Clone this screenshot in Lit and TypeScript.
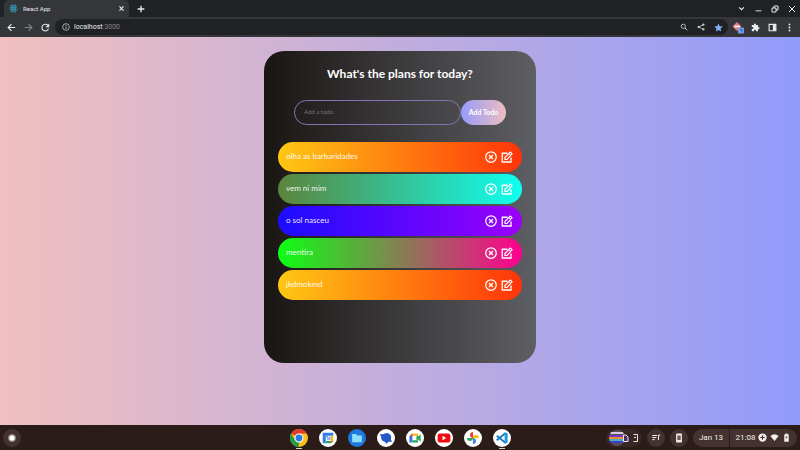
import { LitElement, html, css, svg, TemplateResult } from "lit";
import { customElement, property, state } from "lit/decorators.js";

const icon = (body: TemplateResult, size = 12, box = 24) => html`<svg
  width=${size} height=${size} viewBox="0 0 ${box} ${box}" fill="currentColor" aria-hidden="true">${body}</svg>`;

const stroke = (d: string, width = 2) =>
  svg`<path d=${d} fill="none" stroke="currentColor" stroke-width=${width} />`;

const buttonReset = css`
  * { box-sizing: border-box; }
  button {
    display: flex;
    align-items: center;
    justify-content: center;
    margin: 0;
    padding: 0;
    border: 0;
    background: none;
    color: inherit;
    font: inherit;
    flex: none;
  }
  svg { display: block; flex: none; }
`;

@customElement("browser-bar")
class BrowserBar extends LitElement {
  static styles = [buttonReset, css`
    :host {
      display: block;
      background: #202124;
      color: #e8eaed;
      font: 7px/10px Roboto, sans-serif;
    }
    .tabs { display: flex; height: 17px; padding: 0 1px 0 4px; }
    .tab {
      display: flex;
      align-items: center;
      gap: 5px;
      width: 125px;
      padding: 0 4px 0 5px;
      border-radius: 5px 5px 0 0;
      background: #35363a;
    }
    .title { flex: 1; font-size: 6px; }
    .new { width: 23px; }
    .window { display: flex; align-items: center; gap: 3px; margin-left: auto; }
    .tool { width: 14px; height: 14px; }
    .bar {
      display: flex;
      align-items: center;
      gap: 3px;
      height: 20px;
      padding: 0 4px;
      background: #35363a;
    }
    .dim { color: #85878b; }
    .field {
      display: flex;
      align-items: center;
      flex: 1;
      gap: 3px;
      height: 16px;
      padding: 0 3px 0 7px;
      border-radius: 8px;
      background: #202124;
      color: #c6c8cc;
    }
    .url { flex: 1; padding-left: 1px; color: #85878b; }
    .url b { color: #e8eaed; font-weight: 400; }
    .star { color: #7fb2f5; }
    .extensions { display: flex; gap: 3px; }
  `];

  render() {
    return html`
      <div class="tabs">
        <div class="tab">
          <svg width="9" height="9" viewBox="0 0 24 24" fill="none" stroke="#35a5bd" stroke-width="2">
            <ellipse cx="12" cy="12" rx="11" ry="4" />
            <ellipse cx="12" cy="12" rx="11" ry="4" transform="rotate(60 12 12)" />
            <ellipse cx="12" cy="12" rx="11" ry="4" transform="rotate(120 12 12)" />
            <circle cx="12" cy="12" r="1.5" />
          </svg>
          <span class="title">React App</span>
          <button aria-label="Close tab">${icon(stroke("M5 5 19 19M19 5 5 19", 4), 7)}</button>
        </div>
        <button class="new" aria-label="New tab">${icon(stroke("M12 2V22M2 12H22", 4), 8)}</button>
        <div class="window">
          <button class="tool" aria-label="Search tabs">${icon(stroke("M4 8 12 16 20 8", 4), 7)}</button>
          <button class="tool" aria-label="Minimize">${icon(stroke("M2 20H22", 3), 7)}</button>
          <button class="tool" aria-label="Restore">${icon(stroke("M3 9H15V21H3ZM9 9V3H21V15H15", 3), 8)}</button>
          <button class="tool" aria-label="Close window">${icon(stroke("M3 3 21 21M21 3 3 21", 3), 8)}</button>
        </div>
      </div>
      <div class="bar">
        <button class="tool" aria-label="Back">${icon(stroke("M22 12H3M12 3 3 12 12 21", 3), 9)}</button>
        <button class="tool dim" aria-label="Forward">${icon(stroke("M2 12H21M12 3 21 12 12 21", 3), 9)}</button>
        <button class="tool" aria-label="Reload">${icon(svg`${stroke("M20 15A9 9 0 1 1 18 6", 3)}<path d="M22 1V11H12Z" />`, 9)}</button>
        <div class="field">
          <button aria-label="Site information">${icon(svg`<circle cx="12" cy="12" r="10" fill="none" stroke="currentColor" stroke-width="2.4" />${stroke("M12 10.500V18M12 6V8.500", 2.6)}`, 8)}</button>
          <span class="url" aria-label="Address"><b>localhost</b>:3000</span>
          <button class="tool" aria-label="Zoom">${icon(svg`<circle cx="10" cy="10" r="6.500" fill="none" stroke="currentColor" stroke-width="2.6" />${stroke("M15 15 22 22", 3)}`, 8)}</button>
          <button class="tool" aria-label="Share">${icon(svg`<circle cx="5" cy="12" r="3.500" /><circle cx="19" cy="5" r="3.500" /><circle cx="19" cy="19" r="3.500" />${stroke("M19 5 5 12 19 19", 2.4)}`, 8)}</button>
          <button class="tool star" aria-label="Bookmark">${icon(svg`<path d="M12 1 15.300 8.500 23.500 9.300 17.300 14.700 19.100 22.700 12 18.500 4.900 22.700 6.700 14.700 .5 9.300 8.700 8.500Z" />`, 9)}</button>
        </div>
        <div class="extensions">
          <button class="tool" aria-label="Extension">
            <svg width="14" height="14" viewBox="0 0 14 14">
              <path d="M6 2 10.500 6.500 6 11 1.500 6.500Z" fill="#e9767c" />
              <path d="M3.500 6.500H9" stroke="#fff" stroke-width="1.600" />
              <rect x="7" y="7.500" width="6" height="6" rx="1" fill="#6da0ee" />
              <path d="M9 9.500H11V12" stroke="#315fa8" fill="none" />
            </svg>
          </button>
          <button class="tool" aria-label="Extensions">${icon(svg`<path d="M20.500 11H19V7a2 2 0 0 0-2-2h-4V3.500a2.500 2.500 0 0 0-5 0V5H4a2 2 0 0 0-2 2v3.800h1.500a2.700 2.700 0 0 1 0 5.400H2V20a2 2 0 0 0 2 2h3.800v-1.500a2.700 2.700 0 0 1 5.400 0V22H17a2 2 0 0 0 2-2v-4h1.500a2.500 2.500 0 0 0 0-5Z" />`, 9)}</button>
          <button class="tool" aria-label="Side panel">${icon(svg`${stroke("M3 3.500H21V20.500H3Z", 3)}<path d="M13 3H21V21H13Z" />`, 9)}</button>
          <button class="tool" aria-label="Menu">${icon(svg`<circle cx="12" cy="4" r="2.500" /><circle cx="12" cy="12" r="2.500" /><circle cx="12" cy="20" r="2.500" />`, 9)}</button>
        </div>
      </div>
    `;
  }
}

@customElement("todo-card")
class TodoCard extends LitElement {
  @state() todos = ["olha as barbaridades", "vem ni mim", "o sol nasceu", "mentira", "jkdmokmd"];

  static styles = [buttonReset, css`
    :host {
      display: block;
      box-sizing: border-box;
      width: 272px;
      max-width: 100%;
      min-height: 312px;
      padding: 17px 14px;
      border-radius: 20px;
      background: linear-gradient(90deg, #191513, #5e5f64);
      color: #fff;
      font: 8px/12px Lato, sans-serif;
      text-align: center;
    }
    h1 { margin: 0 0 20px; font-size: 12px; line-height: 12px; font-weight: 700; }
    form { display: flex; justify-content: center; margin: 0 0 17px; }
    input {
      width: 167px;
      height: 25px;
      padding: 0 9px 2px;
      border: 1px solid #8673af;
      border-radius: 13px;
      outline: 0;
      background: transparent;
      color: #fff;
      font: 6px/12px Lato, sans-serif;
    }
    input::placeholder { color: #77757a; opacity: 1; }
    .add {
      width: 45px;
      height: 25px;
      padding-bottom: 2px;
      border-radius: 13px;
      background: linear-gradient(90deg, #959cf9, #edbdc1);
      font-size: 7px;
      font-weight: 700;
    }
    ul { display: grid; gap: 2px; margin: 0; padding: 0; list-style: none; }
    li {
      display: flex;
      align-items: center;
      gap: 4px;
      height: 30px;
      padding: 0 9px 0 8px;
      border-radius: 15px;
      background: linear-gradient(90deg, #ffc814, #ff330a);
    }
    li:nth-child(4n + 2) { background: linear-gradient(90deg, #5c843c, #0ffff0); }
    li:nth-child(4n + 3) { background: linear-gradient(90deg, #1c0cff, #9b00fa); }
    li:nth-child(4n + 4) { background: linear-gradient(90deg, #0cff14, #ff0090); }
    .text { flex: 1; padding-bottom: 2px; text-align: left; color: #fffffff0; }
  `];

  render() {
    return html`
      <h1>What's the plans for today?</h1>
      <form @submit=${(e: Event) => e.preventDefault()}>
        <input type="text" placeholder="Add a todo" aria-label="Add a todo" />
        <button class="add">Add Todo</button>
      </form>
      <ul>
        ${this.todos.map((todo) => html`
          <li>
            <span class="text">${todo}</span>
            <button aria-label="Delete ${todo}">${icon(svg`<circle cx="12" cy="12" r="10.500" fill="none" stroke="currentColor" stroke-width="2.500" />${stroke("M8 8 16 16M16 8 8 16", 2.5)}`, 12)}</button>
            <button aria-label="Edit ${todo}">${icon(svg`${stroke("M13 4.500H2.500V22H20V13", 2.6)}${stroke("M8 17V12.500L18.500 2.300 22 5.700 12 17Z", 2.4)}${stroke("M15.500 5.500 19 9", 2)}`, 12)}</button>
          </li>`)}
      </ul>
    `;
  }
}

const apps: { name: string; running?: boolean; art: TemplateResult }[] = [
  { name: "Chrome", running: true, art: svg`
    <circle cx="12" cy="12" r="12" fill="#fbc116" />
    <path d="M12 12 1.600 6A12 12 0 0 1 22.400 6H12Z" fill="#e33b2e" />
    <path d="M1.600 6 6.800 15 12 17.500 11.500 24A12 12 0 0 1 1.600 6Z" fill="#249b4b" />
    <circle cx="12" cy="12" r="6" fill="#fff" /><circle cx="12" cy="12" r="4.600" fill="#297be8" />` },
  { name: "Calendar", art: svg`
    <circle cx="12" cy="12" r="12" fill="#fff" />
    <path d="M5 5H19V9H9V19H5Z" fill="#3478ee" /><path d="M16 9H19V16H16Z" fill="#fbbc04" />
    <path d="M9 16H16V19H9Z" fill="#34a853" /><path d="M16 16H19L16 19Z" fill="#ea4335" />
    <path d="M9.500 10.500H12V15M14.500 10V15" fill="none" stroke="#3478ee" stroke-width="1.300" />` },
  { name: "Files", art: svg`
    <circle cx="12" cy="12" r="12" fill="#2078de" />
    <path d="M5.500 6.500H11L12.500 8.500H18.500V17.500H5.500Z" fill="#8de0fc" />` },
  { name: "Messages", art: svg`
    <circle cx="12" cy="12" r="12" fill="#fff" />
    <path d="M3.500 7H8Q10 5.500 13 5.500A6 6 0 0 1 18.500 14L20 17H15.500L12.500 19.500 10.500 17A6 6 0 0 1 5.500 10Z" fill="#2458c8" />` },
  { name: "Meet", art: svg`
    <circle cx="12" cy="12" r="12" fill="#fff" />
    <path d="M4.500 10 8.500 6V18H4.500Z" fill="#3478ee" /><path d="M8.500 6H16V9H8.500Z" fill="#fbbc04" />
    <path d="M8.500 15H16V18H8.500ZM14 12 19.500 7V17Z" fill="#26a852" /><path d="M14 9H16V15H14Z" fill="#26a852" />
    <path d="M4.500 10 8.500 6V10Z" fill="#ea4335" />` },
  { name: "YouTube", art: svg`
    <circle cx="12" cy="12" r="12" fill="#fff" />
    <rect x="3.500" y="6" width="17" height="12" rx="3" fill="#f00b12" /><path d="M10 9V15L15 12Z" fill="#fff" />` },
  { name: "Photos", art: svg`
    <circle cx="12" cy="12" r="12" fill="#fff" />
    <path d="M12 12V4A4 4 0 0 0 12 12Z" fill="#ea4335" />
    <path d="M12 12H20A4 4 0 0 0 12 12Z" fill="#fbbc04" />
    <path d="M12 12V20A4 4 0 0 0 12 12Z" fill="#4285f4" />
    <path d="M12 12H4A4 4 0 0 0 12 12Z" fill="#34a853" />` },
  { name: "Code", running: true, art: svg`
    <circle cx="12" cy="12" r="12" fill="#fff" />
    <path d="M5 9 16 18M5 15 16 6" stroke="#167dc4" stroke-width="2.500" />
    <path d="M15.500 4 19.500 6V18L15.500 20Z" fill="#2596e2" />` },
];

@customElement("app-launcher")
class AppLauncher extends LitElement {
  @property({ attribute: false }) app = apps[0];

  static styles = [buttonReset, css`
    :host { display: block; position: relative; }
    .mark {
      position: absolute;
      left: 6px;
      bottom: -2px;
      width: 6px;
      height: 1px;
      background: #d8cfcc;
    }
  `];

  render() {
    return html`
      <button aria-label=${this.app.name}>${icon(this.app.art, 18)}</button>
      ${this.app.running ? html`<span class="mark"></span>` : ""}
    `;
  }
}

@customElement("system-shelf")
class SystemShelf extends LitElement {
  static styles = [buttonReset, css`
    :host {
      display: grid;
      grid-template-columns: 1fr auto 1fr;
      align-items: center;
      height: 25px;
      padding: 0 3px;
      background: #2b1c19;
      color: #f2eeec;
      font: 8px/10px Roboto, sans-serif;
    }
    .apps { display: flex; gap: 11px; }
    .tray { display: flex; justify-content: flex-end; gap: 5px; }
    .round { width: 18px; height: 18px; border-radius: 9px; background: #43322f; }
    .tote {
      height: 18px;
      width: 36px;
      border-radius: 9px;
      background: #382724;
      justify-content: flex-end;
    }
    .status { display: flex; gap: 1px; }
    .date, .time { height: 18px; background: #43322f; }
    .date { width: 36px; border-radius: 9px 0 0 9px; }
    .time { width: 67px; gap: 3px; border-radius: 0 9px 9px 0; }
  `];

  render() {
    return html`
      <button class="round" aria-label="Launcher">${icon(svg`<circle cx="12" cy="12" r="7.500" fill="#fff" stroke="#aaa09e" stroke-width="3" />`, 10)}</button>
      <div class="apps">${apps.map((app) => html`<app-launcher .app=${app}></app-launcher>`)}</div>
      <div class="tray">
        <button class="tote" aria-label="Recent files">
          <svg width="34" height="18" viewBox="0 0 34 18">
            <clipPath id="preview"><circle cx="9" cy="9" r="8" /></clipPath>
            <g clip-path="url(#preview)">
              <path d="M0 0H18V18H0Z" fill="#574e52" />
              <path d="M2 4H16" stroke="#d9c9da" stroke-width="2" />
              <path d="M1 7H17" stroke="#7a38c8" stroke-width="2" />
              <path d="M1 9H17" stroke="#ee8b34" stroke-width="2" />
              <path d="M1 11H17" stroke="#43b3bb" stroke-width="2" />
              <path d="M1 13H17" stroke="#463cc4" stroke-width="2" />
            </g>
            <path d="M15.500 6H18L20 8V12.500H15.500Z" fill="#44336b" stroke="#efe9ef" />
            <path d="M25.500 5.500H29.500V12.500H25.500M26 8.500H28" fill="none" stroke="#eee7e5" />
          </svg>
        </button>
        <button class="round" aria-label="Media controls">${icon(stroke("M3 6H15M3 11H13M3 16H9M18 17V5H22", 2.4), 10)}</button>
        <button class="round" aria-label="Phone hub">${icon(svg`<rect x="5" y="1" width="14" height="22" rx="2" /><path d="M8 6H16V17H8Z" fill="#6b5b58" />`, 10)}</button>
        <div class="status">
          <button class="date">Jan 13</button>
          <button class="time">
            <span>21:08</span>
            ${icon(svg`<circle cx="12" cy="12" r="11" /><path d="M12 6V18M6 12H18" stroke="#43322f" stroke-width="3" />`, 9)}
            ${icon(svg`<path d="M1 8Q12-1 23 8L12 21Z" />`, 9)}
            ${icon(svg`<path d="M9 1H15V4H18V23H6V4H9Z" /><path d="M10 9H14V14H10Z" fill="#66534f" />`, 9)}
          </button>
        </div>
      </div>
    `;
  }
}

@customElement("app-root")
class AppRoot extends LitElement {
  static styles = css`
    :host {
      display: grid;
      grid-template-rows: auto 1fr auto;
      min-height: 100vh;
    }
    main {
      display: flex;
      justify-content: center;
      align-items: flex-start;
      padding: 14px;
      background: linear-gradient(90deg, #f1c0bf, #919bfb);
    }
  `;

  render() {
    return html`
      <browser-bar></browser-bar>
      <main><todo-card></todo-card></main>
      <system-shelf></system-shelf>
    `;
  }
}
